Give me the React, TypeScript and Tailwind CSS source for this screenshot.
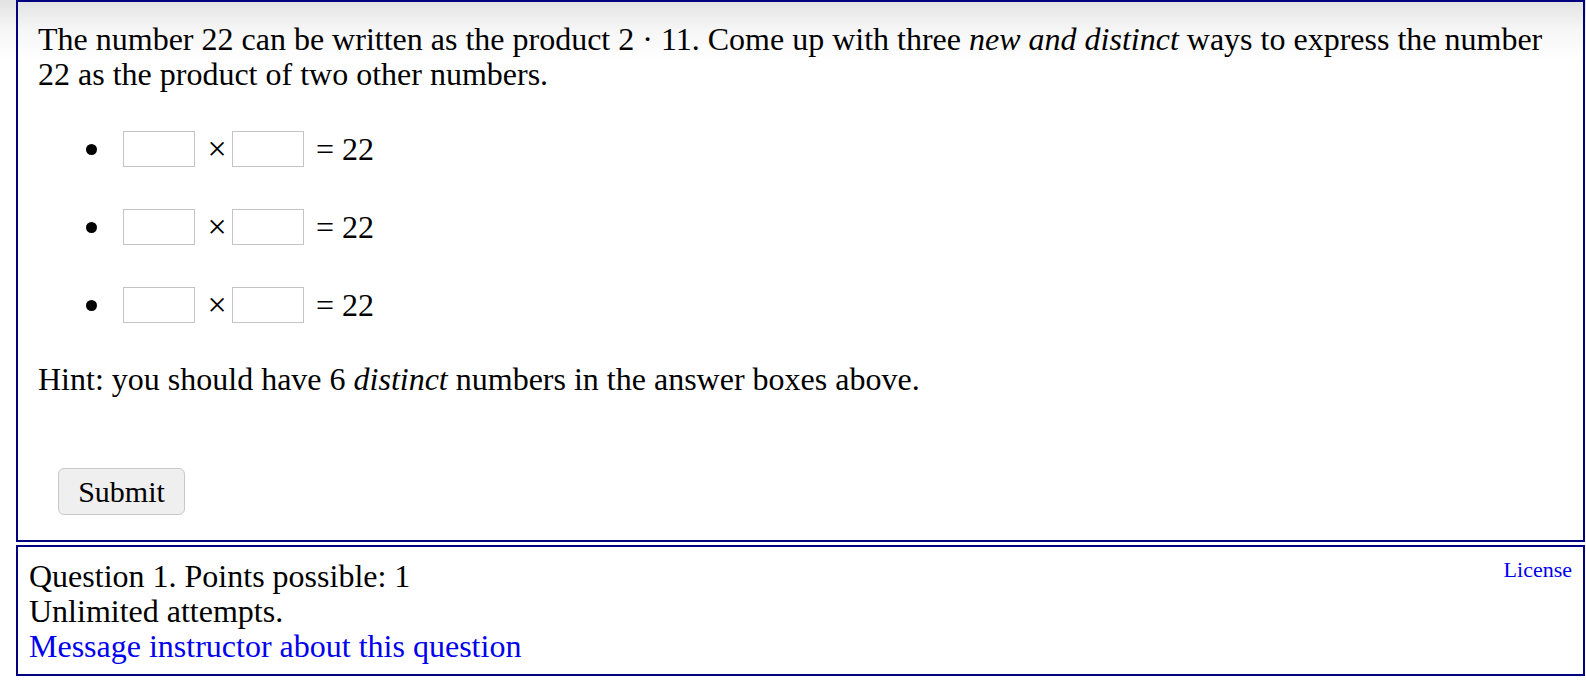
import React from "react";

const serif = { fontFamily: '"Liberation Serif", "Times New Roman", serif' };

function AnswerRow() {
  return (
    <div className="flex items-center h-[36px]">
      <span className="ml-[48px] w-[11px] h-[11px] rounded-full bg-black" />
      <input
        type="text"
        className="ml-[26px] w-[72px] h-[36px] border border-[#c4c4c4] bg-white outline-none"
      />
      <span className="ml-[12px] w-[20px] text-center text-[34px] leading-none">×</span>
      <input
        type="text"
        className="ml-[5px] w-[72px] h-[36px] border border-[#c4c4c4] bg-white outline-none"
      />
      <span className="ml-[12px] text-[32px] leading-none">= 22</span>
    </div>
  );
}

export default function App() {
  return (
    <div
      className="min-h-[680px] w-[1586px] text-black bg-[linear-gradient(to_bottom,#e2e2e2_0px,#f6f6f6_30px,#ffffff_60px)] pr-[1px] pl-[16px]"
      style={serif}
    >
      {/* Question box */}
      <div className="border-2 border-[#000080] pt-[20px] pl-[20px] pr-[20px] pb-[25px]">
        <p className="text-[32px] leading-[35px]">
          The number 22 can be written as the product 2 · 11. Come up with three{" "}
          <i>new and distinct</i> ways to express the number 22 as the product of two other
          numbers.
        </p>

        <div className="mt-[39px] flex flex-col gap-[42px]">
          <AnswerRow />
          <AnswerRow />
          <AnswerRow />
        </div>

        <p className="mt-[39px] text-[32px] leading-[35px]">
          Hint: you should have 6 <i>distinct</i> numbers in the answer boxes above.
        </p>

        <button className="mt-[71px] ml-[20px] w-[127px] h-[47px] rounded-[6px] border border-[#c8c8c8] bg-[#efefef] text-[30px] leading-none">
          Submit
        </button>
      </div>

      {/* Info box */}
      <div className="mt-[3px] border-2 border-[#000080] pt-[12px] pl-[11px] pr-[11px] pb-[10px] flex justify-between">
        <div className="text-[32px] leading-[35px]">
          <div>Question 1. Points possible: 1</div>
          <div>Unlimited attempts.</div>
          <a href="#" className="text-[#0000ee]">
            Message instructor about this question
          </a>
        </div>
        <a href="#" className="text-[22px] leading-[25px] text-[#0000ee] -mt-[2px]">
          License
        </a>
      </div>
    </div>
  );
}
